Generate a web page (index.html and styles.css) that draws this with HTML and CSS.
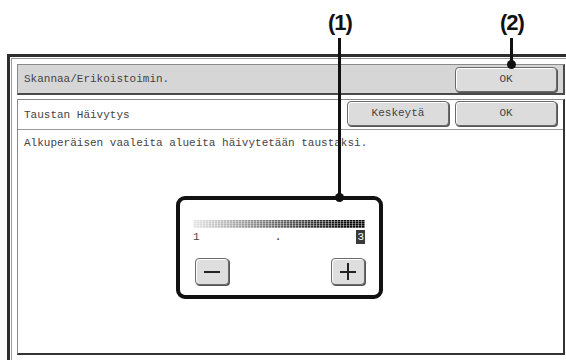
FILE: index.html
```html
<!DOCTYPE html>
<html lang="fi">
<head>
    <meta charset="UTF-8">
    <title>Taustan Häivytys</title>
    <link rel="stylesheet" href="styles.css">
</head>
<body>
<div class="page">
    <div class="callout callout-1">
        <span class="callout-label">(1)</span>
        <span class="callout-line"></span>
        <span class="callout-dot"></span>
    </div>
    <div class="callout callout-2">
        <span class="callout-label">(2)</span>
        <span class="callout-line"></span>
        <span class="callout-dot"></span>
    </div>

    <div class="frame">
        <div class="frame-inner">
            <div class="title-bar">
                <span class="title-text">Skannaa/Erikoistoimin.</span>
                <button class="key">OK</button>
            </div>

            <div class="panel">
                <div class="panel-head">
                    <span class="panel-title">Taustan Häivytys</span>
                    <div class="panel-keys">
                        <button class="key">Keskeytä</button>
                        <button class="key">OK</button>
                    </div>
                </div>
                <p class="panel-text">Alkuperäisen vaaleita alueita häivytetään taustaksi.</p>

                <div class="slider-box">
                    <div class="scale-bar"></div>
                    <div class="scale-labels">
                        <span>1</span>
                        <span class="scale-dot">.</span>
                        <span class="scale-current">3</span>
                    </div>
                    <div class="step-keys">
                        <button class="step-key step-minus"><span class="bar-h"></span></button>
                        <button class="step-key step-plus"><span class="bar-h"></span><span class="bar-v"></span></button>
                    </div>
                </div>
            </div>
        </div>
    </div>
</div>
</body>
</html>
```

FILE: styles.css
```css
body {
    margin: 0;
    background-color: #fff;
}

.page {
    position: relative;
    width: 566px;
    height: 360px;
    overflow: hidden;
    padding-top: 54px;
    box-sizing: border-box;
    font-family: "Liberation Mono", "DejaVu Sans Mono", monospace;
    font-size: 11px;
    color: #444;
}

/* callouts drawn over the screen */
.callout {
    position: absolute;
    top: 0;
    width: 40px;
    z-index: 2;
}

.callout-1 {
    left: 320px;
    height: 202px;
}

.callout-2 {
    left: 492px;
    height: 69px;
}

.callout-label {
    display: block;
    text-align: center;
    font-family: "Liberation Sans", Arial, sans-serif;
    font-weight: bold;
    font-size: 22px;
    line-height: 24px;
    margin-top: 11px;
    color: #111;
    letter-spacing: -1px;
}

.callout-line {
    position: absolute;
    left: 18px;
    top: 38px;
    bottom: 4px;
    width: 3px;
    background-color: #111;
}

.callout-dot {
    position: absolute;
    left: 15px;
    bottom: 0;
    width: 9px;
    height: 9px;
    border-radius: 50%;
    background-color: #111;
}

/* screen frame */
.frame {
    margin-left: 7px;
    height: 306px;
    border-left: 3px solid #2e2e2e;
    border-top: 3px solid #2e2e2e;
    padding: 1px 0 0 1px;
    box-sizing: border-box;
}

.frame-inner {
    height: 100%;
    border-left: 1px solid #9a9a9a;
    border-top: 1px solid #9a9a9a;
    padding: 5px 1px 0 5px;
    box-sizing: border-box;
}

.title-bar {
    display: flex;
    align-items: center;
    justify-content: space-between;
    height: 31px;
    padding: 0 6px 0 6px;
    background-color: #d6d6d6;
    border: 1px solid #8a8a8a;
    border-right: 2px solid #4a4a4a;
    border-bottom: 2px solid #4a4a4a;
    box-sizing: border-box;
}

.key {
    width: 102px;
    height: 25px;
    padding: 0;
    font-family: inherit;
    font-size: 11px;
    color: #444;
    background-color: #dcdcdc;
    border: 1px solid #6a6a6a;
    border-radius: 4px;
    box-shadow: 1px 1px 0 #555, inset 1px 1px 0 #fff;
}

.panel {
    margin-top: 4px;
    height: 256px;
    background-color: #fff;
    border-left: 1px solid #8a8a8a;
    border-top: 1px solid #8a8a8a;
    border-right: 2px solid #333;
    border-bottom: 2px solid #333;
    box-sizing: border-box;
}

.panel-head {
    display: flex;
    align-items: center;
    justify-content: space-between;
    height: 30px;
    padding: 0 6px 0 6px;
    border-bottom: 1px solid #999;
    box-sizing: border-box;
}

.panel-keys {
    display: flex;
    gap: 6px;
    margin-top: -3px;
}

.panel-text {
    margin: 7px 0 0 6px;
    line-height: 12px;
}

/* slider */
.slider-box {
    width: 207px;
    height: 103px;
    margin: 47px 0 0 158px;
    border: 4px solid #111;
    border-radius: 9px;
    padding: 20px 14px 0 13px;
    box-sizing: border-box;
}

.scale-bar {
    height: 8px;
    background-image:
        repeating-linear-gradient(90deg, rgba(255,255,255,0.45) 0 1px, transparent 1px 3px),
        repeating-linear-gradient(0deg, rgba(255,255,255,0.3) 0 1px, transparent 1px 2px),
        linear-gradient(90deg, #e6e6e6, #9a9a9a 30%, #4a4a4a 60%, #111 85%, #000);
}

.scale-labels {
    display: flex;
    justify-content: space-between;
    align-items: center;
    height: 16px;
    margin-top: 1px;
}

.scale-dot {
    font-weight: bold;
}

.scale-current {
    padding: 0 1px;
    color: #fff;
    background-color: #3a3a3a;
    line-height: 14px;
}

.step-keys {
    display: flex;
    justify-content: space-between;
    margin-top: 13px;
    padding-left: 2px;
}

.step-key {
    position: relative;
    width: 34px;
    height: 27px;
    padding: 0;
    background-color: #dedede;
    border: 1px solid #6a6a6a;
    border-radius: 4px;
    box-shadow: 1px 1px 0 #555, inset 1px 1px 0 #fff;
}

.bar-h {
    position: absolute;
    left: 8px;
    right: 8px;
    top: 12px;
    height: 2px;
    background-color: #222;
}

.bar-v {
    position: absolute;
    left: 15px;
    top: 4px;
    bottom: 4px;
    width: 2px;
    background-color: #222;
}
```
